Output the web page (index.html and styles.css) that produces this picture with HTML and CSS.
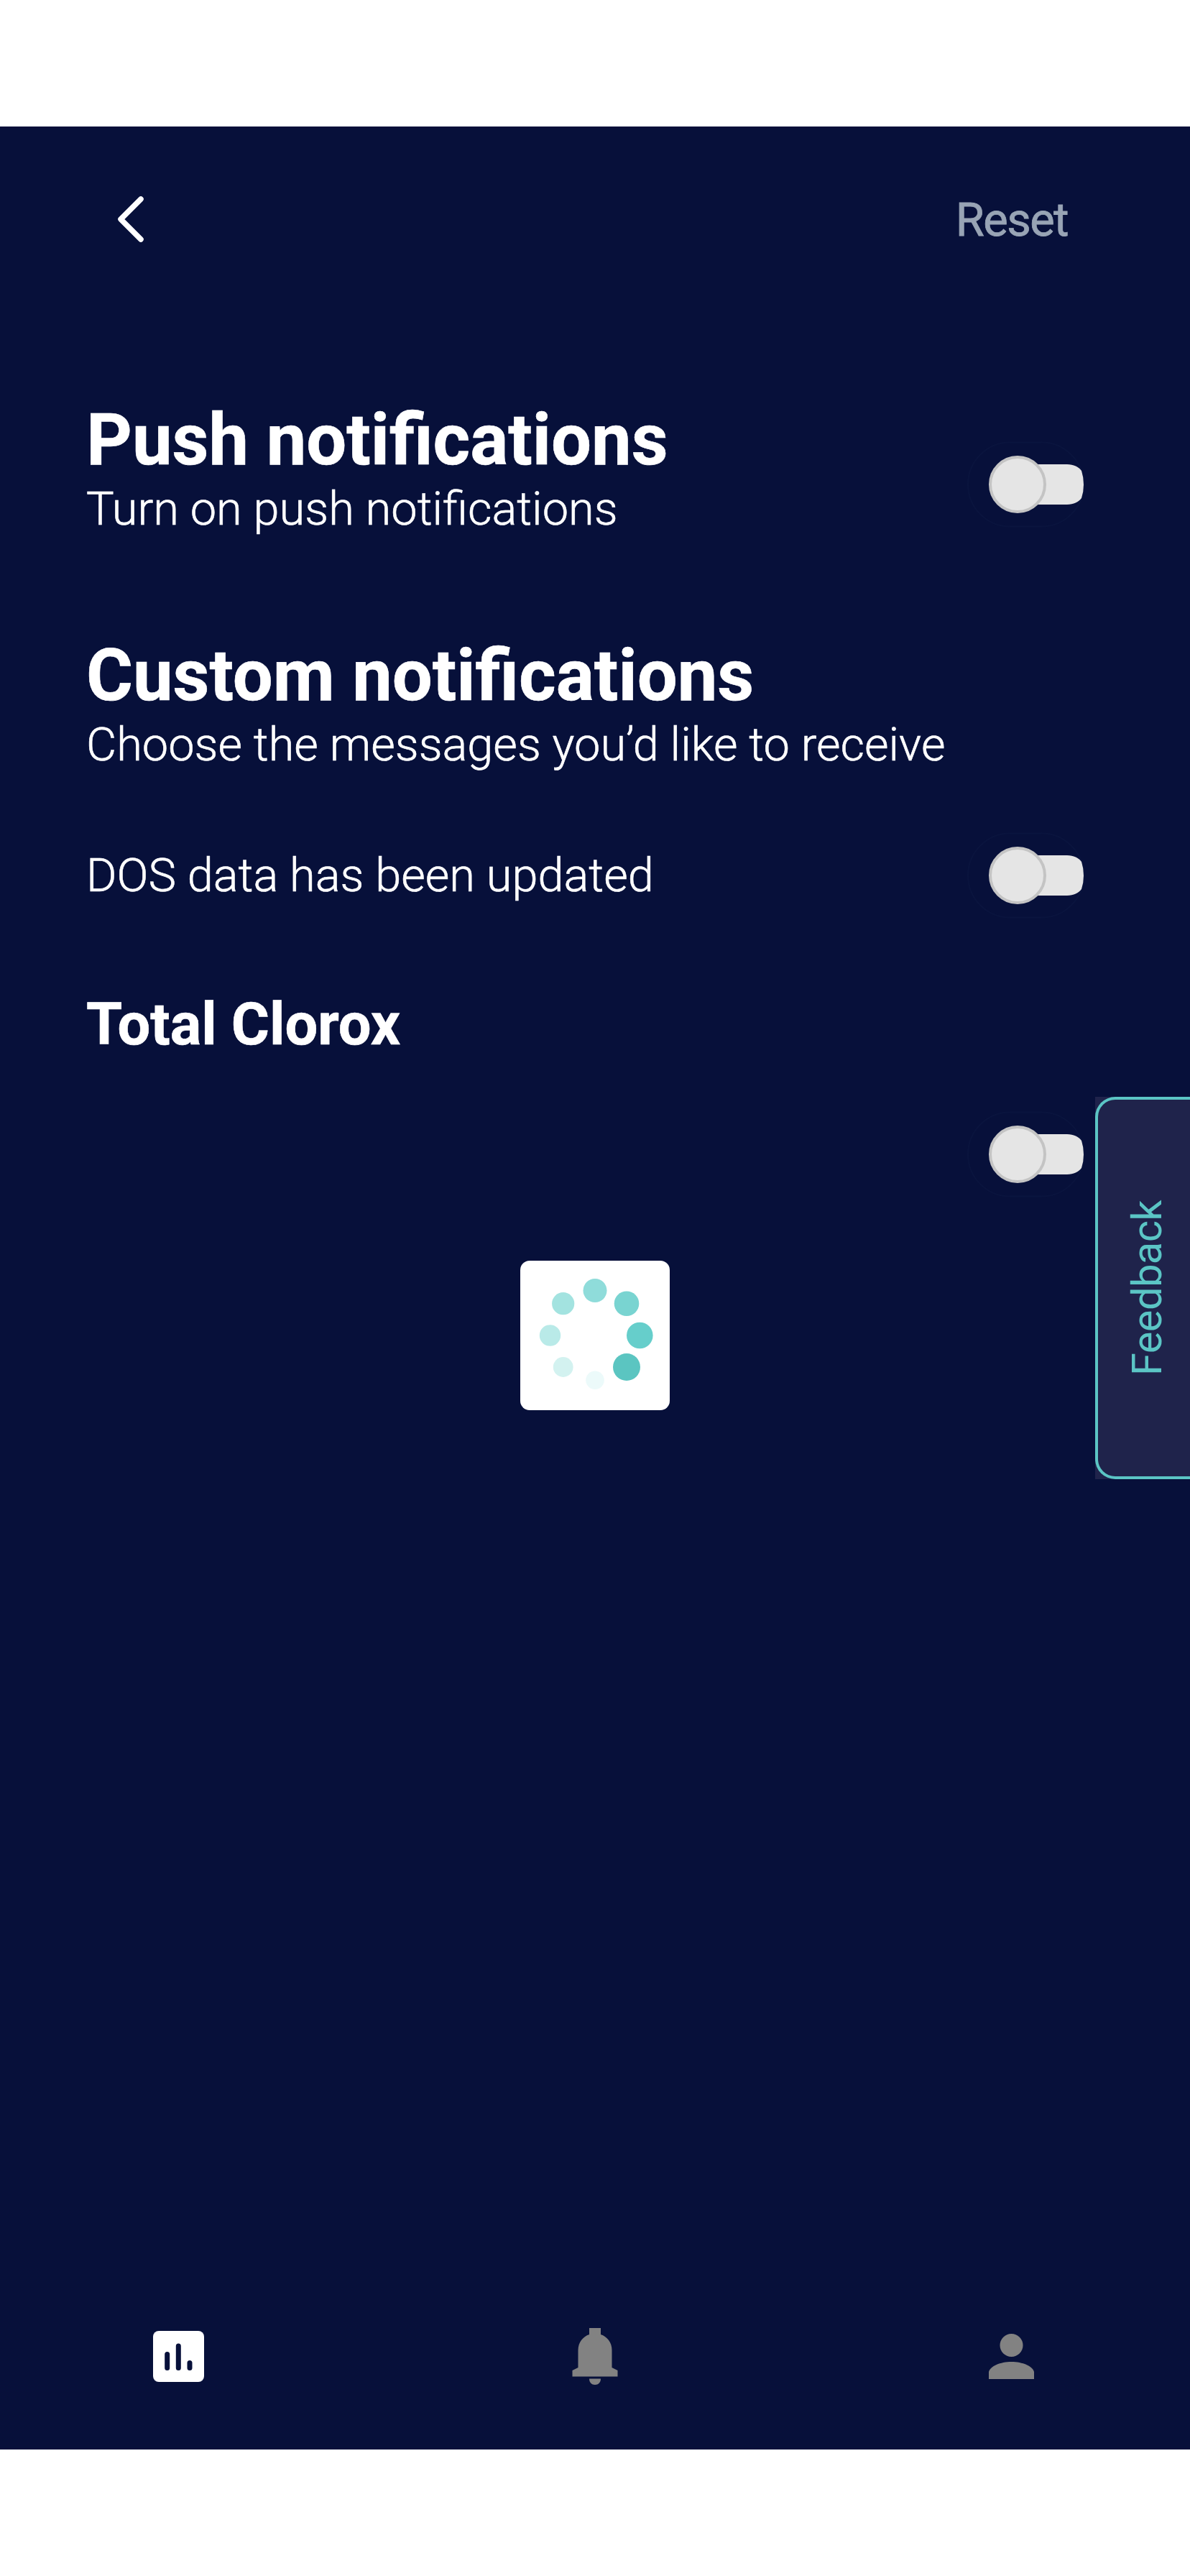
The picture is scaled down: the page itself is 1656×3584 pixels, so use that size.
FILE: index.html
```html
<!DOCTYPE html>
<html lang="en">
<head>
<meta charset="utf-8">
<title>Notifications</title>
<link rel="stylesheet" href="styles.css">
</head>
<body>
<svg class="defs" width="0" height="0" aria-hidden="true">
  <symbol id="toggle" viewBox="0 0 180 120">
    <rect x="2" y="1.500" width="161" height="117" rx="58.500" fill="none" stroke="#0a143e" stroke-width="2"/>
    <path d="M72 32H140C149 32 156 35.500 160 41Q163 50 163 60T160 79C156 84.500 149 88 140 88H72Z" fill="#e5e5e5"/>
    <circle cx="71" cy="60" r="38" fill="#e5e5e5" stroke="#c4c4c4" stroke-width="4"/>
  </symbol>
</svg>
<div class="screen">
  <header class="topbar">
    <svg class="back" width="40" height="66" viewBox="0 0 40 66"><path d="M34 5L6 33L34 61" fill="none" stroke="#fff" stroke-width="7.500" stroke-linecap="round" stroke-linejoin="round"/></svg>
    <span class="reset">Reset</span>
  </header>
  <main class="content">
    <section class="row push">
      <div>
        <h1 class="title">Push notifications</h1>
        <p class="text">Turn on push notifications</p>
      </div>
      <svg class="toggle"><use href="#toggle"/></svg>
    </section>
    <section class="custom">
      <h1 class="title">Custom notifications</h1>
      <p class="text">Choose the messages you’d like to receive</p>
    </section>
    <section class="row dos">
      <p class="text">DOS data has been updated</p>
      <svg class="toggle"><use href="#toggle"/></svg>
    </section>
    <h2 class="group">Total Clorox</h2>
    <section class="row last">
      <svg class="toggle"><use href="#toggle"/></svg>
    </section>
  </main>
  <nav class="tabs">
    <svg width="80" height="90" viewBox="0 0 80 90"><rect x="5" y="9" width="71" height="71" rx="8" fill="#fff"/><path d="M24.700 41.500V60.500M40.300 30V60.500M56 53.500V60.500" stroke="#07103a" stroke-width="7" stroke-linecap="round"/></svg>
    <svg width="80" height="90" viewBox="0 0 80 90" fill="#828282"><path d="M32 5H48V14C57 17 63.500 25 63.500 36V60L71.500 64V72.500H8.500V64L16.500 60V36C16.500 25 23 17 32 14ZM32 75.500H48C48 81 44.500 84 40 84S32 81 32 75.500Z"/></svg>
    <svg width="80" height="90" viewBox="0 0 80 90" fill="#828282"><circle cx="39.500" cy="29" r="16"/><path d="M8 76V66C10 58 24 52 39.500 52S69 58 71 66V76Z"/></svg>
  </nav>
  <aside class="feedback"><span>Feedback</span></aside>
  <div class="loader">
    <svg width="208" height="208" viewBox="0 0 208 208">
      <circle cx="104" cy="41.500" r="16.500" fill="#8fdcda"/>
      <circle cx="148" cy="59.700" r="17.300" fill="#79d4d1"/>
      <circle cx="166.300" cy="104" r="18.300" fill="#66cecb"/>
      <circle cx="148" cy="148" r="19" fill="#5bc5c1"/>
      <circle cx="104" cy="166.300" r="12.800" fill="#ecfafa"/>
      <circle cx="59.700" cy="148" r="13.900" fill="#d3f2f0"/>
      <circle cx="41.500" cy="104" r="14.700" fill="#b9eae8"/>
      <circle cx="59.700" cy="59.700" r="15.600" fill="#a3e3e0"/>
    </svg>
  </div>
</div>
</body>
</html>
```
FILE: styles.css
```css
* { box-sizing: border-box; }
body { margin: 0; background: #fff; font-family: Roboto, sans-serif; color: #fff; }
.defs { display: block; }
h1, h2, p { margin: 0; }
.screen {
  position: relative;
  display: flex;
  flex-direction: column;
  width: 1656px;
  height: 3232px;
  margin-top: 176px;
  background: #07103a;
}
.topbar {
  display: flex;
  justify-content: space-between;
  align-items: center;
  height: 258px;
  padding: 0 170px 0 162px;
}
.back { display: block; }
.reset { padding-top: 1px; font-size: 65px; line-height: 76px; letter-spacing: -1.5px; color: #98a4b5; -webkit-text-stroke: .8px #98a4b5; }
.content { display: flex; flex-direction: column; flex: 1; padding-left: 120px; }
.row { display: flex; justify-content: space-between; align-items: center; padding-right: 131px; }
.toggle { display: block; width: 180px; height: 120px; flex: none; }
.title { font-size: 99.2px; line-height: 111px; font-weight: 700; -webkit-text-stroke: .6px #fff; }
.text { font-size: 64.9px; line-height: 80px; font-weight: 300; -webkit-text-stroke: .6px #fff; }
.push { margin-top: 123px; align-items: flex-end; }
.push .toggle { margin-bottom: 14px; }
.custom { margin-top: 137px; }
.dos { margin-top: 82px; }
.group { margin-top: 93px; font-size: 81.2px; line-height: 110px; font-weight: 700; -webkit-text-stroke: .6px #fff; }
.last { justify-content: flex-end; margin-top: 65px; }
.tabs { display: flex; justify-content: space-between; height: 174px; padding: 0 208px; }
.tabs svg { display: block; }
.feedback {
  position: absolute;
  top: 1350px;
  right: 0;
  display: flex;
  align-items: center;
  justify-content: center;
  width: 132px;
  height: 532px;
  padding-left: 11px;
  background: #1f234b;
  color: #5bc5c5;
  font-size: 58px;
}
.feedback::before {
  content: "";
  position: absolute;
  inset: 0;
  border: 4px solid #5bc5c5;
  border-right: 0;
  border-radius: 28px 0 0 28px;
}
.feedback span { writing-mode: vertical-rl; transform: rotate(180deg); line-height: 72px; letter-spacing: -.7px; }
.loader {
  position: absolute;
  top: 1578px;
  left: 724px;
  width: 208px;
  height: 208px;
  border-radius: 13px;
  background: #fff;
}
.loader svg { display: block; }
```
